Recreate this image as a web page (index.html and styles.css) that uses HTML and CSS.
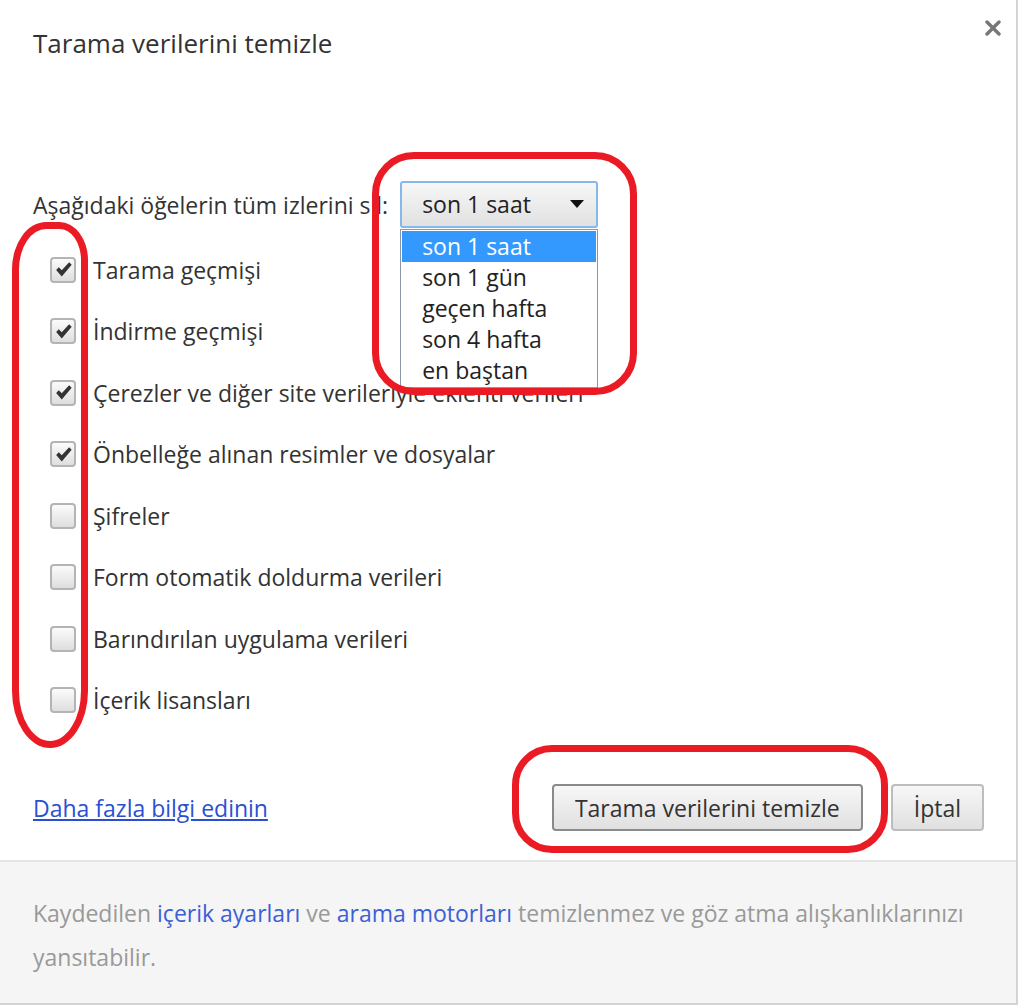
FILE: index.html
```html
<!DOCTYPE html>
<html lang="tr">
<head>
  <meta charset="UTF-8" />
  <meta name="viewport" content="width=device-width, initial-scale=1.0"/>
  <title>Tarama verilerini temizle</title>
  <link rel="stylesheet" href="styles.css">
</head>
<body>
  <div class="dialog">
    <div class="dialog-main">
      <div class="header">
        <h1 class="title">Tarama verilerini temizle</h1>
        <svg class="close" width="16" height="16" viewBox="0 0 16 16">
          <path d="M2 2L14 14M14 2L2 14" stroke="#777" stroke-width="3.4" stroke-linecap="round"/>
        </svg>
      </div>

      <div class="period-row">
        <span class="period-label">Aşağıdaki öğelerin tüm izlerini sil:</span>
        <div class="select-wrap">
          <div class="select">son 1 saat <span class="arrow"></span></div>
          <ul class="dropdown">
            <li class="selected">son 1 saat</li>
            <li>son 1 gün</li>
            <li>geçen hafta</li>
            <li>son 4 hafta</li>
            <li>en baştan</li>
          </ul>
        </div>
      </div>

      <ul class="options">
        <li><span class="box checked"></span>Tarama geçmişi</li>
        <li><span class="box checked"></span>İndirme geçmişi</li>
        <li><span class="box checked"></span>Çerezler ve diğer site verileriyle eklenti verileri</li>
        <li><span class="box checked"></span>Önbelleğe alınan resimler ve dosyalar</li>
        <li><span class="box"></span>Şifreler</li>
        <li><span class="box"></span>Form otomatik doldurma verileri</li>
        <li><span class="box"></span>Barındırılan uygulama verileri</li>
        <li><span class="box"></span>İçerik lisansları</li>
      </ul>

      <div class="actions">
        <a class="more" href="#">Daha fazla bilgi edinin</a>
        <div class="buttons">
          <button class="btn btn-default">Tarama verilerini temizle</button>
          <button class="btn">İptal</button>
        </div>
      </div>
    </div>

    <div class="dialog-footer">
      Kaydedilen <a href="#">içerik ayarları</a> ve <a href="#">arama motorları</a> temizlenmez ve göz atma alışkanlıklarınızı yansıtabilir.
    </div>

    <!-- red annotation marks drawn over the screenshot -->
    <div class="mark mark-select"></div>
    <div class="mark mark-checks"></div>
    <div class="mark mark-button"></div>
  </div>
</body>
</html>
```

FILE: styles.css
```css
body {
  margin: 0;
  background: #fff;
  font-family: "Open Sans", "Noto Sans", sans-serif;
  color: #333;
}
.dialog {
  position: relative;
  width: 1016px;
  height: 1003px;
  border-right: 2px solid #d4d4d4;
  border-bottom: 2px solid #d4d4d4;
  overflow: hidden;
}
.dialog-main {
  padding: 0 32px 0 33px;
  height: 860px;
  box-sizing: border-box;
}
.header {
  display: flex;
  justify-content: space-between;
  align-items: flex-start;
  padding-top: 23px;
}
.title {
  margin: 0;
  font-size: 26px;
  font-weight: normal;
  line-height: 40px;
  color: #333;
}
.close {
  margin: -3px -17px 0 0;
}
.period-row {
  display: flex;
  align-items: center;
  margin-top: 118px;
  font-size: 23px;
}
.select-wrap {
  position: relative;
  margin-left: 12px;
}
.select {
  width: 198px;
  height: 47px;
  box-sizing: border-box;
  border: 2px solid #86b8ec;
  border-radius: 3px;
  background: linear-gradient(#f7f7f7, #e1e1e1);
  padding-left: 20px;
  line-height: 43px;
  color: #222;
}
.arrow {
  position: absolute;
  right: 14px;
  top: 19px;
  border-left: 7px solid transparent;
  border-right: 7px solid transparent;
  border-top: 8px solid #111;
}
.dropdown {
  position: absolute;
  left: 0;
  top: 48px;
  width: 198px;
  box-sizing: border-box;
  margin: 0;
  padding: 1px;
  list-style: none;
  background: #fff;
  border: 1px solid #8a98aa;
}
.dropdown li {
  height: 31px;
  line-height: 30px;
  padding-left: 20px;
  color: #222;
}
.dropdown li.selected {
  background: #3399ff;
  color: #fff;
}
.options {
  list-style: none;
  margin: 11px 0 0;
  padding: 0;
  font-size: 23px;
}
.options li {
  display: flex;
  align-items: center;
  height: 61.5px;
}
.box {
  width: 26px;
  height: 26px;
  box-sizing: border-box;
  margin: 0 17px 0 17px;
  border: 2px solid #b4b4b4;
  border-radius: 4px;
  background: linear-gradient(#fbfbfb, #dedede);
}
.box.checked {
  background: url("data:image/svg+xml,%3Csvg xmlns='http://www.w3.org/2000/svg' viewBox='0 0 22 22'%3E%3Cpath d='M2.5 11.5L5.5 8.5L9 12L17.5 2.5L20.5 5.5L9 19Z' fill='%23333'/%3E%3C/svg%3E") center/19px no-repeat, linear-gradient(#fbfbfb, #dedede);
}
.actions {
  display: flex;
  justify-content: space-between;
  align-items: center;
  margin-top: 53px;
  font-size: 23px;
}
.more {
  color: #2a4fd2;
  text-decoration: underline;
}
.buttons {
  display: flex;
  gap: 28px;
}
.btn {
  height: 47px;
  padding: 0 21px;
  font: inherit;
  color: #333;
  border: 2px solid #bdbdbd;
  border-radius: 4px;
  background: linear-gradient(#f7f7f7, #e0e0e0);
}
.btn-default {
  border-color: #8a8a8a;
}
.dialog-footer {
  border-top: 2px solid #e6e6e6;
  background: #f5f5f5;
  padding: 29px 33px 0;
  height: 143px;
  box-sizing: border-box;
  font-size: 23px;
  line-height: 44px;
  color: #999;
}
.dialog-footer a {
  color: #3d5fd6;
  text-decoration: none;
}
.mark {
  position: absolute;
  border: 7px solid #ea1b24;
  box-sizing: border-box;
  pointer-events: none;
}
.mark-select {
  left: 372px;
  top: 152px;
  width: 265px;
  height: 243px;
  border-radius: 42px;
}
.mark-checks {
  left: 12px;
  top: 222px;
  width: 76px;
  height: 526px;
  border-radius: 36px 30px 40px 40px / 50px 40px 60px 60px;
}
.mark-button {
  left: 512px;
  top: 745px;
  width: 376px;
  height: 108px;
  border-radius: 40px;
}
```
